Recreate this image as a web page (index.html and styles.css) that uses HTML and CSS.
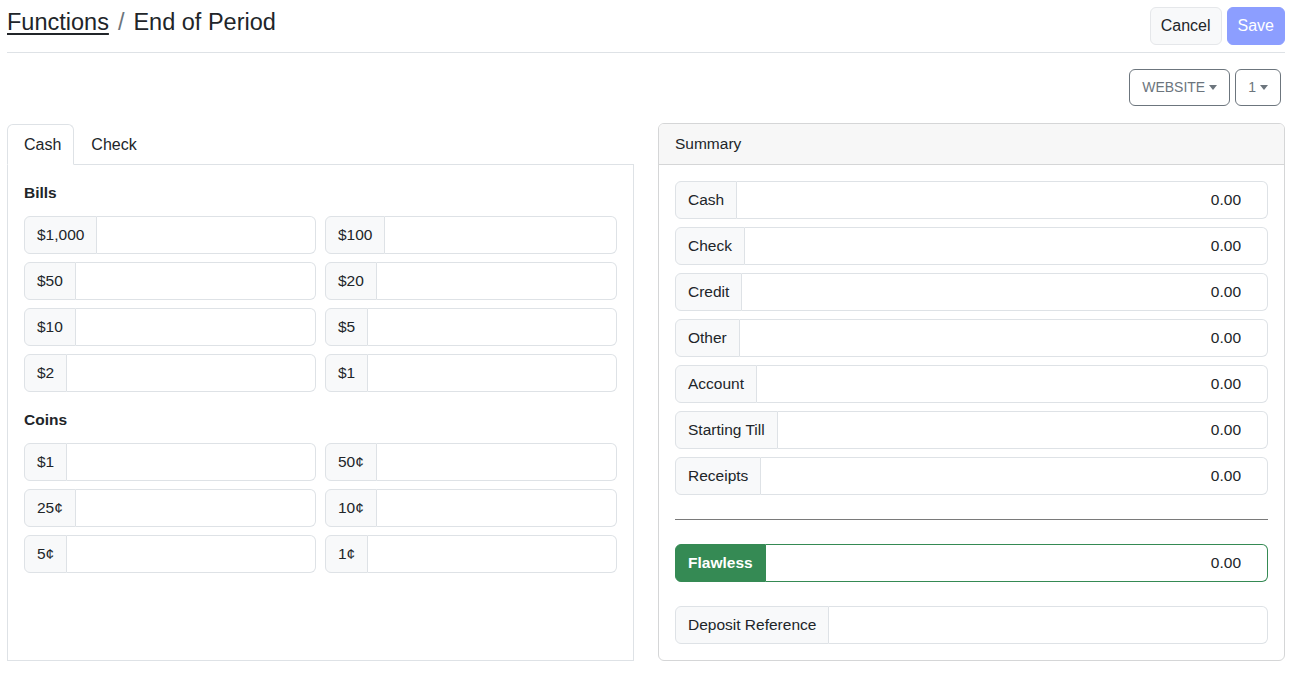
FILE: index.html
```html
<!DOCTYPE html>
<html lang="en">
<head>
<meta charset="utf-8">
<title>End of Period</title>
<link rel="stylesheet" href="styles.css">
</head>
<body>
<div class="page">
  <header class="topbar">
    <h1 class="title"><a href="#" class="crumb">Functions</a><span class="sep">/</span>End of Period</h1>
    <div class="actions">
      <button class="btn btn-light">Cancel</button>
      <button class="btn btn-save" disabled>Save</button>
    </div>
  </header>

  <div class="toolbar">
    <button class="btn btn-outline">WEBSITE<span class="caret"></span></button>
    <button class="btn btn-outline">1<span class="caret"></span></button>
  </div>

  <div class="columns">
    <section class="left">
      <nav class="tabs">
        <a href="#" class="tab active">Cash</a>
        <a href="#" class="tab">Check</a>
      </nav>
      <div class="tab-content">
        <h6 class="group-title">Bills</h6>
        <div class="grid">
          <div class="input-group"><span class="addon">$1,000</span><input class="field" type="text"></div>
          <div class="input-group"><span class="addon">$100</span><input class="field" type="text"></div>
          <div class="input-group"><span class="addon">$50</span><input class="field" type="text"></div>
          <div class="input-group"><span class="addon">$20</span><input class="field" type="text"></div>
          <div class="input-group"><span class="addon">$10</span><input class="field" type="text"></div>
          <div class="input-group"><span class="addon">$5</span><input class="field" type="text"></div>
          <div class="input-group"><span class="addon">$2</span><input class="field" type="text"></div>
          <div class="input-group"><span class="addon">$1</span><input class="field" type="text"></div>
        </div>
        <h6 class="group-title coins">Coins</h6>
        <div class="grid">
          <div class="input-group"><span class="addon">$1</span><input class="field" type="text"></div>
          <div class="input-group"><span class="addon">50¢</span><input class="field" type="text"></div>
          <div class="input-group"><span class="addon">25¢</span><input class="field" type="text"></div>
          <div class="input-group"><span class="addon">10¢</span><input class="field" type="text"></div>
          <div class="input-group"><span class="addon">5¢</span><input class="field" type="text"></div>
          <div class="input-group"><span class="addon">1¢</span><input class="field" type="text"></div>
        </div>
      </div>
    </section>

    <section class="card">
      <div class="card-header">Summary</div>
      <div class="card-body">
        <div class="summary-list">
          <div class="input-group"><span class="addon">Cash</span><input class="field value" type="text" value="0.00"></div>
          <div class="input-group"><span class="addon">Check</span><input class="field value" type="text" value="0.00"></div>
          <div class="input-group"><span class="addon">Credit</span><input class="field value" type="text" value="0.00"></div>
          <div class="input-group"><span class="addon">Other</span><input class="field value" type="text" value="0.00"></div>
          <div class="input-group"><span class="addon">Account</span><input class="field value" type="text" value="0.00"></div>
          <div class="input-group"><span class="addon">Starting Till</span><input class="field value" type="text" value="0.00"></div>
          <div class="input-group"><span class="addon">Receipts</span><input class="field value" type="text" value="0.00"></div>
        </div>
        <hr class="divider">
        <div class="input-group success"><span class="addon">Flawless</span><input class="field value" type="text" value="0.00"></div>
        <div class="input-group deposit"><span class="addon">Deposit Reference</span><input class="field" type="text"></div>
      </div>
    </section>
  </div>
</div>
</body>
</html>
```

FILE: styles.css
```css
* { box-sizing: border-box; }

html, body {
  margin: 0;
  padding: 0;
  background: #fff;
}

body {
  font-family: "Liberation Sans", Arial, sans-serif;
  font-size: 16px;
  line-height: 24px;
  color: #212529;
}

.page {
  padding: 7px 7px 13px 7px;
}

.topbar {
  display: flex;
  align-items: center;
  justify-content: space-between;
  padding-bottom: 7px;
  border-bottom: 1px solid #dee2e6;
}

.title {
  margin: 0;
  font-size: 23.5px;
  font-weight: 400;
  line-height: 29px;
  margin-top: -8px;
}

.crumb {
  color: #212529;
  text-decoration: underline;
  text-underline-offset: 3px;
  text-decoration-thickness: 2px;
}

.sep {
  margin: 0 9px;
  color: #6c757d;
}

.actions {
  display: flex;
  gap: 5px;
}

.btn {
  font-family: inherit;
  font-size: 16px;
  line-height: 24px;
  padding: 6px 10px;
  border-radius: 6px;
  border: 1px solid transparent;
  cursor: pointer;
  display: inline-flex;
  align-items: center;
}

.btn-light {
  background: #f8f9fa;
  border-color: #e5e7ea;
  color: #212529;
}

.btn-save {
  background: #8c9eff;
  border-color: #8c9eff;
  color: #fff;
}

.toolbar {
  display: flex;
  justify-content: flex-end;
  gap: 5px;
  padding: 16px 4px 0 0;
  margin-bottom: 17px;
}

.btn-outline {
  background: #fff;
  border-color: #6c757d;
  color: #6c757d;
  font-size: 14px;
  padding: 6px 12px;
  line-height: 23px;
}

.caret {
  display: inline-block;
  margin-left: 4px;
  border-top: 5px solid #6c757d;
  border-left: 4px solid transparent;
  border-right: 4px solid transparent;
}

.columns {
  display: grid;
  grid-template-columns: minmax(0, 1fr) minmax(0, 1fr);
  gap: 24px;
  align-items: stretch;
}

.left {
  display: flex;
  flex-direction: column;
  padding-top: 1px;
}

.tabs {
  display: flex;
  border-bottom: 1px solid #dee2e6;
}

.tab {
  display: block;
  padding: 8px 16px 7px 16px;
  color: #212529;
  text-decoration: none;
  border: 1px solid transparent;
  border-top-left-radius: 6px;
  border-top-right-radius: 6px;
  margin-bottom: -1px;
}

.tab.active {
  border-color: #dee2e6 #dee2e6 #fff;
  background: #fff;
  padding-right: 12px;
}

.tab-content {
  flex: 1;
  border: 1px solid #dee2e6;
  border-top: none;
  padding: 16px 16px;
}

.group-title {
  margin: 0 0 11px 0;
  font-size: 15.5px;
  font-weight: 700;
  line-height: 24px;
}

.group-title.coins {
  margin-top: 16px;
  margin-bottom: 11px;
}

.grid {
  display: grid;
  grid-template-columns: minmax(0, 1fr) minmax(0, 1fr);
  column-gap: 9px;
  row-gap: 8px;
}

.input-group {
  display: flex;
  height: 38px;
  min-width: 0;
}

.addon {
  display: flex;
  align-items: center;
  padding: 6px 12px;
  background: #f8f9fa;
  border: 1px solid #dee2e6;
  border-radius: 6px 0 0 6px;
  white-space: nowrap;
  font-size: 15.5px;
}

.field {
  flex: 1;
  width: 0;
  min-width: 0;
  font-family: inherit;
  font-size: 15.5px;
  color: #212529;
  padding: 6px 12px;
  border: 1px solid #dee2e6;
  border-left: none;
  border-radius: 0 6px 6px 0;
  background: #fff;
  outline: none;
}

.field.value {
  text-align: right;
  padding-right: 26px;
}

.card {
  border: 1px solid #d5d6d7;
  border-radius: 6px;
  display: flex;
  flex-direction: column;
  overflow: hidden;
}

.card-header {
  background: #f7f7f7;
  border-bottom: 1px solid #d5d6d7;
  padding: 8px 16px;
  height: 41px;
  font-size: 15.5px;
}

.card-body {
  padding: 16px;
  flex: 1;
}

.summary-list {
  display: flex;
  flex-direction: column;
  gap: 8px;
}

.divider {
  border: none;
  border-top: 1px solid #7a7a7a;
  margin: 24px 0;
}

.input-group.success .addon {
  background: #358a54;
  border-color: #358a54;
  color: #fff;
  font-weight: 700;
}

.input-group.success .field {
  border-color: #358a54;
  border-left: none;
}

.input-group.deposit {
  margin-top: 24px;
}
```
